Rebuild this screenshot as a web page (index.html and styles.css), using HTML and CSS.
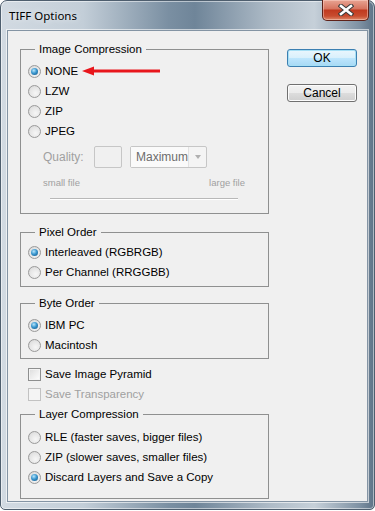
FILE: index.html
```html
<!DOCTYPE html>
<html lang="en">
<head>
  <meta charset="UTF-8" />
  <title>TIFF Options</title>
  <link rel="stylesheet" href="styles.css">
</head>
<body>
  <div class="window">
    <!-- Title bar -->
    <div class="titlebar">
      <span class="title">TIFF Options</span>
      <button class="close" title="Close">
        <svg width="16" height="12" viewBox="0 0 16 12">
          <path d="M3 2 L13 10 M13 2 L3 10" stroke="#3a3a3a" stroke-width="4.6" stroke-linecap="square" fill="none"/>
          <path d="M3 2 L13 10 M13 2 L3 10" stroke="#ffffff" stroke-width="2.6" stroke-linecap="square" fill="none"/>
        </svg>
      </button>
    </div>

    <div class="client">
      <div class="options">
        <fieldset class="group group-compression">
          <legend>Image Compression</legend>
          <div class="opt"><span class="radio on"></span>NONE
            <svg class="arrow" width="82" height="10" viewBox="0 0 82 10">
              <path d="M0 5 L12 0.5 L12 9.5 Z" fill="#e8161c"/>
              <rect x="10" y="3.5" width="68" height="3" fill="#e8161c"/>
            </svg>
          </div>
          <div class="opt"><span class="radio"></span>LZW</div>
          <div class="opt"><span class="radio"></span>ZIP</div>
          <div class="opt"><span class="radio"></span>JPEG</div>
          <div class="quality">
            <span class="quality-label">Quality:</span>
            <span class="quality-box"></span>
            <span class="select"><span class="select-text">Maximum</span><span class="select-caret"></span></span>
          </div>
          <div class="range-labels"><span>small file</span><span>large file</span></div>
          <div class="slider"></div>
        </fieldset>

        <fieldset class="group group-pixel">
          <legend>Pixel Order</legend>
          <div class="opt"><span class="radio on"></span>Interleaved (RGBRGB)</div>
          <div class="opt"><span class="radio"></span>Per Channel (RRGGBB)</div>
        </fieldset>

        <fieldset class="group group-byte">
          <legend>Byte Order</legend>
          <div class="opt"><span class="radio on"></span>IBM PC</div>
          <div class="opt"><span class="radio"></span>Macintosh</div>
        </fieldset>

        <div class="checks">
          <div class="opt"><span class="check"></span>Save Image Pyramid</div>
          <div class="opt disabled"><span class="check"></span>Save Transparency</div>
        </div>

        <fieldset class="group group-layer">
          <legend>Layer Compression</legend>
          <div class="opt"><span class="radio"></span>RLE (faster saves, bigger files)</div>
          <div class="opt"><span class="radio"></span>ZIP (slower saves, smaller files)</div>
          <div class="opt"><span class="radio on"></span>Discard Layers and Save a Copy</div>
        </fieldset>
      </div>

      <div class="actions">
        <button class="btn btn-default">OK</button>
        <button class="btn">Cancel</button>
      </div>
    </div>
  </div>
</body>
</html>
```

FILE: styles.css
```css
html, body {
  margin: 0;
  padding: 0;
  background: #ffffff;
}
body {
  width: 375px;
  height: 511px;
  overflow: hidden;
  font-family: "Liberation Sans", Arial, sans-serif;
  font-size: 11.5px;
  color: #000000;
}

/* Window frame */
.window {
  width: 373px;
  height: 508px;
  border: 1px solid #4e5e6e;
  border-radius: 7px 7px 5px 5px;
  background: linear-gradient(90deg, #d2dae2 0%, #c3ced8 22%, #7a8fa2 45%, #6f8599 52%, #aebbc7 72%, #c6d0d9 84%, #7f92a4 96%, #5e7387 100%);
  box-shadow: inset 0 0 0 1px rgba(255, 255, 255, 0.5);
  display: flex;
  flex-direction: column;
}
.titlebar {
  height: 29px;
  display: flex;
  align-items: flex-start;
  justify-content: space-between;
}
.title {
  font-family: "Noto Sans", "Open Sans", sans-serif;
  font-size: 11.5px;
  margin: 7px 0 0 8px;
  color: #000000;
  text-shadow: 0 0 6px rgba(255, 255, 255, 0.9);
}
.close {
  width: 47px;
  height: 21px;
  margin: -1px 5px 0 0;
  padding: 0;
  border: 1px solid #5e2219;
  border-top: none;
  border-radius: 0 0 5px 5px;
  background: linear-gradient(180deg, #e8a493 0%, #d6735e 45%, #c0391f 50%, #c84c2f 80%, #dd8a6a 100%);
  box-shadow: inset 0 0 0 1px rgba(255, 220, 210, 0.45);
  display: flex;
  align-items: center;
  justify-content: center;
}

/* Client area */
.client {
  flex: 1;
  margin: 0 6px 7px 6px;
  border: 1px solid #8494a4;
  outline: 1px solid rgba(255, 255, 255, 0.6);
  background: #f0f0f0;
  display: flex;
  padding: 11px 0 0 12px;
}
.options {
  width: 249px;
  display: flex;
  flex-direction: column;
}
.actions {
  display: flex;
  flex-direction: column;
  gap: 17px;
  margin: 7px 0 0 18px;
}

/* Group boxes */
.group {
  margin: 0;
  padding: 5px 7px 0;
  border: 1px solid #8f9090;
  min-width: 0;
  box-sizing: border-box;
}
.group legend {
  padding: 0 4px;
  margin-left: 7px;
  line-height: 14px;
}
.group-compression {
  height: 172px;
}
.group-pixel {
  margin-top: 11px;
  height: 62px;
  padding-top: 3px;
}
.group-byte {
  margin-top: 9px;
  height: 63px;
  padding-top: 5px;
}
.group-layer {
  margin-top: 3px;
  height: 92px;
  padding-top: 6px;
}
.checks {
  padding: 5px 0 0 8px;
}

/* Option rows */
.opt {
  height: 20px;
  display: flex;
  align-items: center;
  white-space: nowrap;
}
.opt.disabled {
  color: #a0a0a0;
}
.radio {
  width: 11px;
  height: 11px;
  border: 1px solid #9a9a9a;
  border-radius: 50%;
  background: radial-gradient(circle at 60% 65%, #f6f6f6 0%, #e4e4e4 60%, #cfcfcf 100%);
  margin-right: 4px;
  display: flex;
  align-items: center;
  justify-content: center;
  flex: none;
}
.radio.on::after {
  content: '';
  width: 7px;
  height: 7px;
  border-radius: 50%;
  background: radial-gradient(circle at 40% 35%, #b9e6fb 0%, #3a97cf 45%, #0f4f80 100%);
}
.check {
  width: 11px;
  height: 11px;
  border: 1px solid #8e8f8f;
  background: linear-gradient(135deg, #dcdcdc 0%, #f4f4f4 70%, #ffffff 100%);
  box-shadow: inset 0 0 0 1px #f4f4f4;
  margin-right: 4px;
  flex: none;
}
.opt.disabled .check {
  border-color: #c2c2c2;
  background: #f4f4f4;
}
.arrow {
  margin-left: 4px;
}

/* Quality controls (disabled) */
.quality {
  display: flex;
  align-items: center;
  height: 22px;
  margin-top: 5px;
  padding-left: 15px;
  color: #a0a0a0;
}
.quality-label {
  font-size: 12px;
  width: 51px;
}
.quality-box {
  width: 26px;
  height: 20px;
  border: 1px solid #c6c6c6;
  border-radius: 2px;
  background: #f0f0f0;
}
.select {
  width: 75px;
  height: 20px;
  margin-left: 8px;
  border: 1px solid #c6c6c6;
  border-radius: 2px;
  background: #f4f4f4;
  display: flex;
  align-items: center;
}
.select-text {
  flex: 1;
  padding-left: 5px;
  color: #6d6d6d;
  font-size: 12px;
  border-right: 1px solid #e2e2e2;
  height: 20px;
  line-height: 20px;
  background: #fafafa;
}
.select-caret {
  width: 17px;
  display: flex;
  justify-content: center;
}
.select-caret::after {
  content: '';
  border-left: 3px solid transparent;
  border-right: 3px solid transparent;
  border-top: 4px solid #b0b0b0;
}
.range-labels {
  display: flex;
  justify-content: space-between;
  width: 202px;
  margin: 9px 0 0 15px;
  font-size: 9.5px;
  line-height: 12px;
  color: #a0a0a0;
}
.slider {
  width: 188px;
  height: 1px;
  margin: 9px 0 0 22px;
  background: #b8b8b8;
  border-bottom: 1px solid #ffffff;
}

/* Buttons */
.btn {
  width: 70px;
  height: 18px;
  padding: 0;
  border: 1px solid #707070;
  border-radius: 3px;
  background: linear-gradient(180deg, #f2f2f2 0%, #ebebeb 49%, #dddddd 50%, #cfcfcf 100%);
  box-shadow: inset 0 0 0 1px #fcfcfc;
  font-family: "Liberation Sans", Arial, sans-serif;
  font-size: 12px;
  line-height: 14px;
  color: #000000;
}
.btn-default {
  border-color: #3c7fb1;
  background: linear-gradient(180deg, #eaf6fd 0%, #d9f0fc 49%, #bee6fd 50%, #a7d9f5 100%);
  box-shadow: inset 0 0 0 1px #a6dff5;
}
```
